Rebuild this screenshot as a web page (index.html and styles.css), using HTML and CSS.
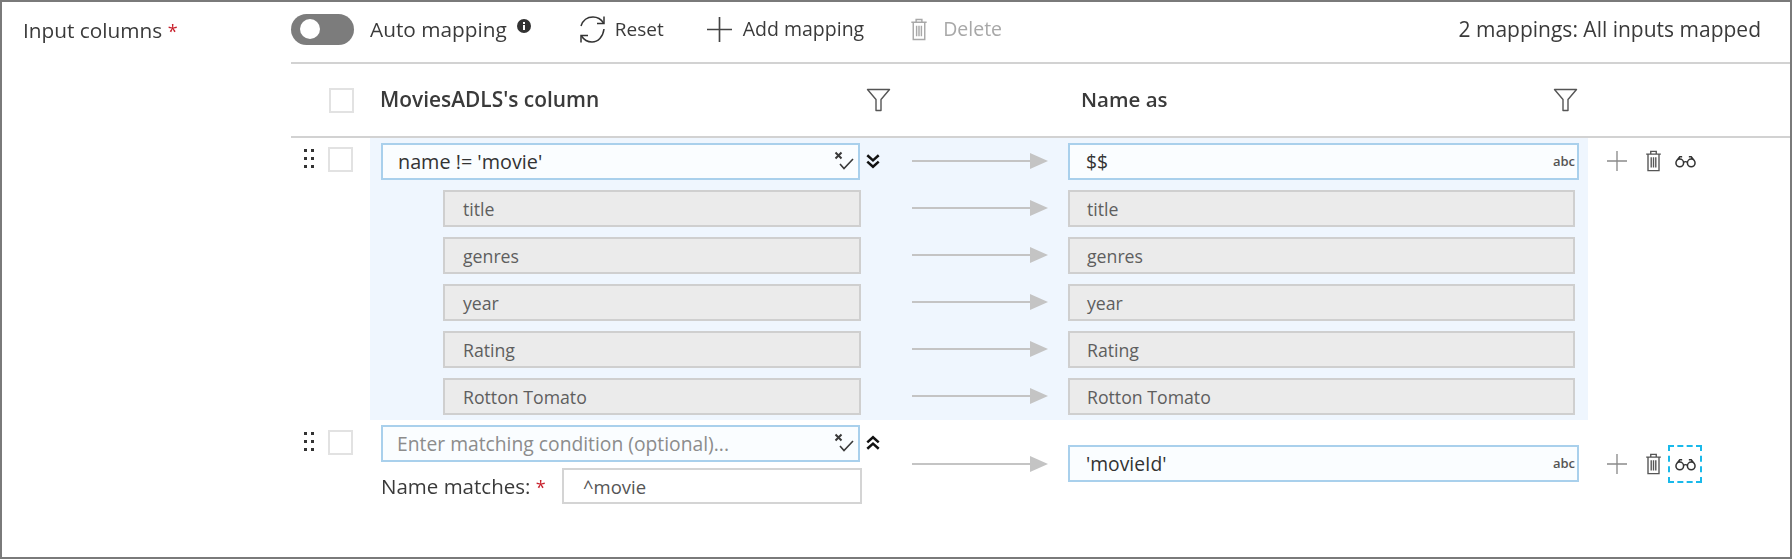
FILE: index.html
```html
<!DOCTYPE html>
<html lang="en">
<head>
<meta charset="utf-8">
<title>Input columns</title>
<link rel="stylesheet" href="styles.css">
</head>
<body>
<svg class="defs" width="0" height="0" aria-hidden="true">
  <symbol id="i-trash" viewBox="0 0 18 24"><path d="M1 4.500h16M6 4.500V1.500h6v3M3 4.500V22.500h12V4.500M6.500 8v11M9 8v11M11.500 8v11" fill="none" stroke="currentColor" stroke-width="1.500"/></symbol>
  <symbol id="i-plus" viewBox="0 0 24 24"><path d="M12 0v24M0 12h24" fill="none" stroke="currentColor" stroke-width="1.600"/></symbol>
  <symbol id="i-filter" viewBox="0 0 25 24"><path d="M1.500 1.500h22l-8.500 10v11h-5v-11z" fill="none" stroke="currentColor" stroke-width="1.400" stroke-linejoin="round"/></symbol>
  <symbol id="i-glasses" viewBox="0 0 22 14"><path d="M1 9a4 4 0 1 0 8 0a4 4 0 1 0-8 0M13 9a4 4 0 1 0 8 0a4 4 0 1 0-8 0M9 8.500c1-1 3-1 4 0M1.500 7L5 2.500h2.500M20.500 7L17 2.500h-2.500" fill="none" stroke="currentColor" stroke-width="1.600"/></symbol>
  <symbol id="i-xcheck" viewBox="0 0 20 20"><path d="M1.500 1.500l6 6M7.500 1.500l-6 6" fill="none" stroke="currentColor" stroke-width="2"/><path d="M6 13l4 4.500l9-9.500" fill="none" stroke="currentColor" stroke-width="1.600"/></symbol>
  <symbol id="i-chev" viewBox="0 0 14 14"><path d="M2 2l5 4.500l5-4.500M2 7.500l5 4.500l5-4.500" fill="none" stroke="currentColor" stroke-width="2.200"/></symbol>
  <symbol id="i-dots" viewBox="0 0 10 20"><g fill="currentColor"><rect width="3" height="3" x="0" y="0"/><rect width="3" height="3" x="7" y="0"/><rect width="3" height="3" x="0" y="8"/><rect width="3" height="3" x="7" y="8"/><rect width="3" height="3" x="0" y="16"/><rect width="3" height="3" x="7" y="16"/></g></symbol>
  <symbol id="i-arrow" viewBox="0 0 136 16"><path d="M0 8h118" stroke="#c4c4c4" stroke-width="2"/><path d="M118 0l18 8l-18 8z" fill="#c4c4c4"/></symbol>
</svg>

<div class="frame">
  <div class="field-label">Input columns <span class="req">*</span></div>
  <div class="main">
    <div class="toolbar">
      <span class="toggle"><span class="knob"></span></span>
      <span class="tool-text t-auto">Auto mapping</span>
      <svg class="info" viewBox="0 0 14 14"><circle cx="7" cy="7" r="7" fill="#333"/><rect x="6" y="6" width="2" height="5" fill="#fff"/><rect x="6" y="3" width="2" height="2" fill="#fff"/></svg>
      <svg class="reset" viewBox="0 0 29 29"><path d="M3 11C5 5 10 2 15 2c4 0 8 2 10.500 6M26 14c-1 8-6 13-12 13c-4 0-8-2-10.500-6" fill="none" stroke="#333" stroke-width="1.500"/><path d="M26 1.500V8.500H19M3 27.500V20.500H10" fill="none" stroke="#333" stroke-width="1.500"/></svg>
      <span class="tool-text t-reset">Reset</span>
      <svg class="plus-lg"><use href="#i-plus"/></svg>
      <span class="tool-text t-add">Add mapping</span>
      <svg class="trash-tool"><use href="#i-trash"/></svg>
      <span class="tool-text t-delete">Delete</span>
      <span class="tool-text summary">2 mappings: All inputs mapped</span>
    </div>

    <div class="head">
      <span class="check head-check"></span>
      <span class="head-title first">MoviesADLS's column</span>
      <svg class="filter"><use href="#i-filter"/></svg>
      <span class="head-title second">Name as</span>
      <svg class="filter"><use href="#i-filter"/></svg>
    </div>

    <div class="map-row">
      <div class="lead"><svg class="dots"><use href="#i-dots"/></svg><span class="check"></span></div>
      <div class="body active">
        <div class="pair">
          <div class="cell-left">
            <div class="input live lg">name != 'movie'<svg class="xcheck"><use href="#i-xcheck"/></svg></div>
          </div>
          <svg class="chev"><use href="#i-chev"/></svg>
          <svg class="arrow"><use href="#i-arrow"/></svg>
          <div class="input live target">$$<span class="abc">abc</span></div>
        </div>
        <div class="pair sub"><div class="input ro src">title</div><span></span><svg class="arrow"><use href="#i-arrow"/></svg><div class="input ro dst">title</div></div>
        <div class="pair sub"><div class="input ro src">genres</div><span></span><svg class="arrow"><use href="#i-arrow"/></svg><div class="input ro dst">genres</div></div>
        <div class="pair sub"><div class="input ro src">year</div><span></span><svg class="arrow"><use href="#i-arrow"/></svg><div class="input ro dst">year</div></div>
        <div class="pair sub"><div class="input ro src">Rating</div><span></span><svg class="arrow"><use href="#i-arrow"/></svg><div class="input ro dst">Rating</div></div>
        <div class="pair sub"><div class="input ro src">Rotton Tomato</div><span></span><svg class="arrow"><use href="#i-arrow"/></svg><div class="input ro dst">Rotton Tomato</div></div>
      </div>
      <div class="actions top">
        <svg class="a-plus"><use href="#i-plus"/></svg>
        <svg class="a-trash"><use href="#i-trash"/></svg>
        <span class="glass-box"><svg class="a-glass"><use href="#i-glasses"/></svg></span>
      </div>
    </div>

    <div class="map-row">
      <div class="lead second-lead"><svg class="dots"><use href="#i-dots"/></svg><span class="check"></span></div>
      <div class="body">
        <div class="pair centered">
          <div class="cell-left">
            <div class="input live placeholder">Enter matching condition (optional)...<svg class="xcheck"><use href="#i-xcheck"/></svg></div>
            <div class="match">
              <span class="match-label">Name matches: <span class="req">*</span></span>
              <div class="input plain">^movie</div>
            </div>
          </div>
          <svg class="chev up"><use href="#i-chev"/></svg>
          <svg class="arrow"><use href="#i-arrow"/></svg>
          <div class="input live target">'movieId'<span class="abc">abc</span></div>
        </div>
      </div>
      <div class="actions mid">
        <svg class="a-plus"><use href="#i-plus"/></svg>
        <svg class="a-trash"><use href="#i-trash"/></svg>
        <span class="glass-box focus"><svg class="a-glass"><use href="#i-glasses"/></svg></span>
      </div>
    </div>
  </div>
</div>
</body>
</html>
```

FILE: styles.css
```css
* { box-sizing: border-box; }
html, body { margin: 0; padding: 0; background: #fff; }
.defs { position: absolute; }
body {
  font-family: "Open Sans", "Noto Sans", sans-serif;
  font-size: 20.800px;
  color: #3a3a3a;
}
.frame {
  width: 1792px;
  height: 559px;
  border: 2px solid #7a7a7a;
  display: flex;
  overflow: hidden;
  filter: blur(0.45px);
}
.field-label {
  width: 289px;
  padding: 16px 0 0 21px;
  line-height: 24px;
  flex: none;
}
.req { color: #c8202c; font-size: 18px; }
.main { flex: 1; min-width: 0; }

.toolbar {
  height: 62px;
  border-bottom: 2px solid #d2d2d2;
  display: flex;
  align-items: center;
  padding-bottom: 6px;
}
.toggle {
  width: 63px;
  height: 31px;
  border-radius: 16px;
  background: #7c7c7c;
  display: flex;
  align-items: center;
  padding-left: 9px;
  flex: none;
}
.knob { width: 20px; height: 20px; border-radius: 50%; background: #fff; }
.tool-text { white-space: nowrap; line-height: 24px; }
.t-auto { margin-left: 16px; }
.info { width: 14px; height: 14px; margin: -6px 0 0 10px; flex: none; }
.reset { width: 29px; height: 29px; margin-left: 47px; flex: none; }
.t-reset { margin-left: 8px; font-size: 19px; }
.plus-lg { width: 25px; height: 25px; margin-left: 43px; color: #444; flex: none; }
.t-add { margin-left: 11px; font-size: 19.500px; }
.trash-tool { width: 18px; height: 23px; margin-left: 46px; color: #a8a8a8; flex: none; }
.t-delete { margin-left: 15px; color: #a8a8a8; font-size: 19.500px; }
.summary { margin-left: auto; margin-right: 29px; font-size: 21px; }

.head {
  height: 74px;
  border-bottom: 2px solid #d2d2d2;
  display: flex;
  align-items: center;
}
.check {
  display: block;
  width: 25px;
  height: 25px;
  border: 2px solid #e2e2e2;
  background: #fff;
  flex: none;
}
.head-check { margin-left: 38px; }
.head-title { font-weight: 600; font-size: 20.900px; white-space: nowrap; margin-top: -2px; }
.first { margin-left: 26px; width: 486px; }
.second { margin-left: 190px; width: 472px; font-size: 20.500px; }
.filter { width: 25px; height: 24px; color: #555; flex: none; }

.map-row { display: flex; align-items: flex-start; }
.lead {
  width: 79px;
  flex: none;
  padding: 9px 0 0 13px;
  display: flex;
  gap: 14px;
}
.second-lead { padding-top: 10px; }
.dots { width: 10px; height: 20px; margin-top: 2px; color: #333; flex: none; }
.body {
  width: 1218px;
  flex: none;
  padding: 5px 9px 5px 11px;
}
.active { background: #eff6fe; }
.pair {
  display: grid;
  grid-template-columns: 479px 52px 136px 531px;
  align-items: center;
}
.target { margin-left: 20px; width: 511px; }
.centered .target { margin-bottom: 2px; }
.sub { margin-top: 10px; }
.input {
  height: 37px;
  display: flex;
  align-items: center;
  padding-left: 16px;
  white-space: nowrap;
  position: relative;
  font-size: 19.300px;
}
.lg { font-size: 19.800px; padding-left: 15px; }
.live { background: #fafdff; border: 2px solid #a9d0ec; color: #333; }
.placeholder { color: #8c8c8c; padding-left: 14px; }
.ro {
  background: #ebebeb;
  border: 2px solid #cfcfcf;
  color: #5e5e5e;
  font-size: 17.700px;
}
.src { margin-left: 62px; width: 418px; padding-left: 18px; }
.dst { margin-left: 20px; width: 507px; padding-left: 17px; }
.plain { background: #fff; border: 2px solid #d4d4d4; color: #555; width: 300px; height: 36px; padding-left: 19px; font-size: 18.500px; }
.xcheck { width: 20px; height: 20px; position: absolute; right: 4px; top: 6px; color: #3a3a3a; }
.abc { position: absolute; right: 2px; top: 8px; font-size: 13px; font-weight: 600; color: #555; line-height: 16px; }
.chev { width: 16px; height: 16px; margin-left: 5px; align-self: start; margin-top: 10px; color: #111; }
.up { transform: scaleY(-1); }
.arrow { width: 136px; height: 16px; margin-bottom: 2px; }
.match { display: flex; align-items: center; margin-top: 6px; width: 481px; justify-content: space-between; }
.match-label { white-space: nowrap; font-size: 20.500px; }

.actions { display: flex; align-items: center; padding-left: 19px; flex: none; }
.top { padding-top: 2px; height: 44px; }
.mid { margin-top: 25px; height: 38px; }
.a-plus { width: 20px; height: 20px; color: #8a8a8a; }
.a-trash { width: 17px; height: 22px; margin-left: 18px; color: #555; }
.glass-box {
  width: 34px;
  height: 38px;
  margin-left: 6px;
  padding-left: 1px;
  display: flex;
  align-items: center;
  justify-content: center;
  border: 2px dashed transparent;
}
.focus { border-color: #19b9ea; }
.a-glass { width: 21px; height: 14px; color: #333; }
```
